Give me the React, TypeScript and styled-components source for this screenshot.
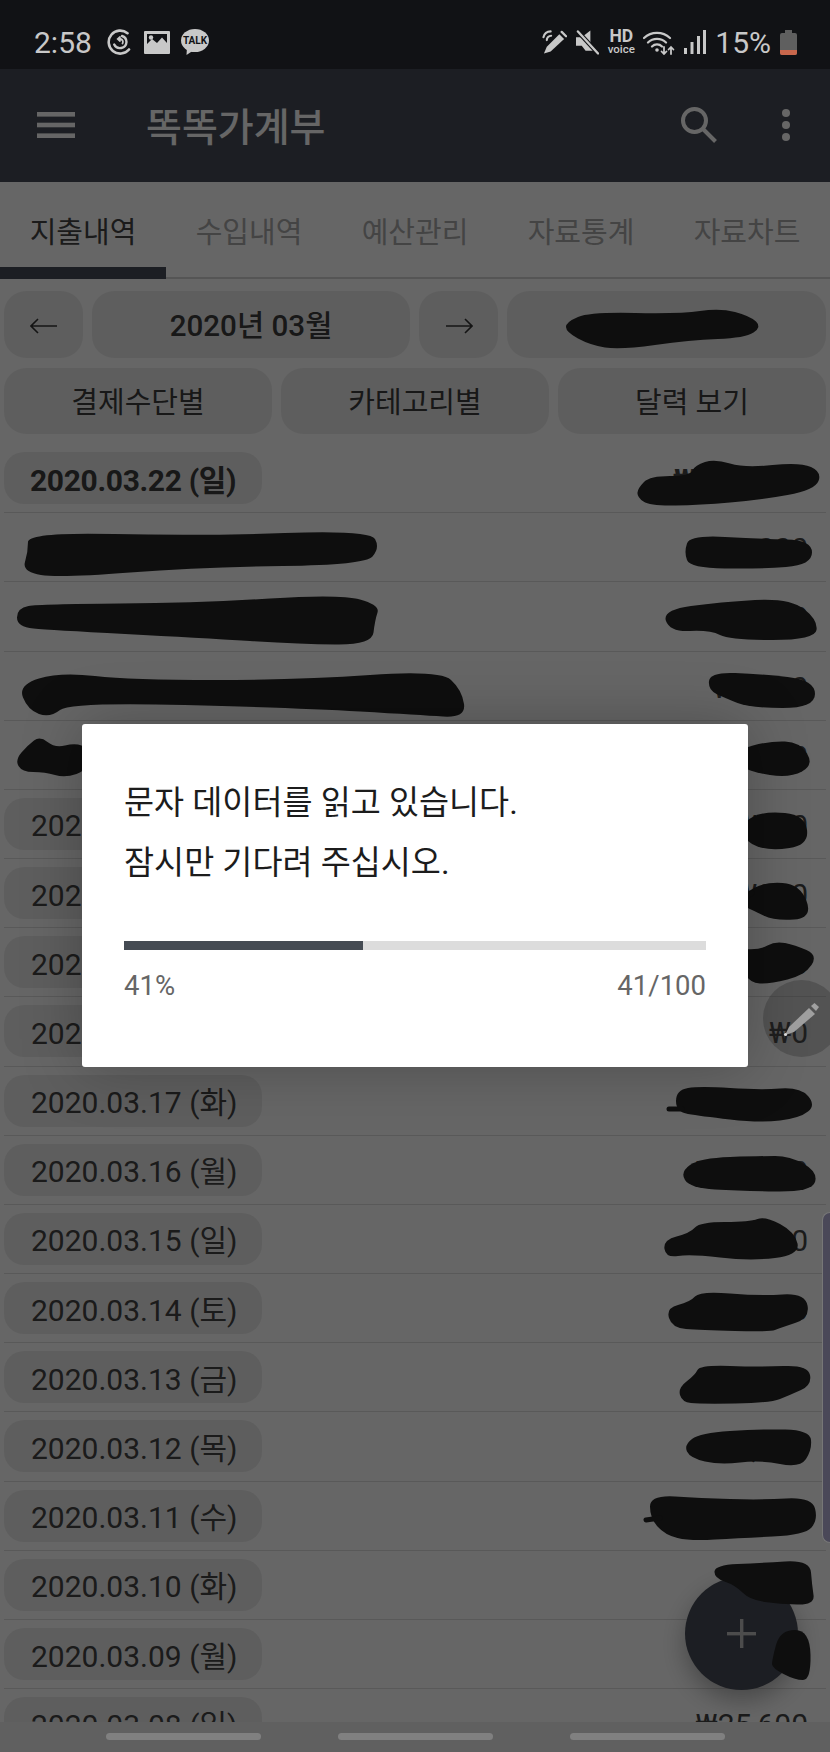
import React from "react"
import styled, { createGlobalStyle } from "styled-components"

const GlobalStyle = createGlobalStyle`
  html, body { margin: 0; padding: 0; background: #666; }
  body { font-family: Roboto, "Noto Sans CJK KR", sans-serif; }
  * { box-sizing: border-box; }
`

const TABS = ["지출내역", "수입내역", "예산관리", "자료통계", "자료차트"]
const FILTERS = ["결제수단별", "카테고리별", "달력 보기"]

interface RowData {
  date?: string
  amount: string
  bold?: boolean
}

// names and amounts are scribbled out in the reference, zeros only peek out at the edges
const ROWS: RowData[] = [
  { date: "2020.03.22 (일)", amount: "₩000,000", bold: true },
  { amount: "₩00,000" },
  { amount: "₩00,000" },
  { amount: "₩0,000" },
  { amount: "₩000" },
  { date: "2020.03.21 (토)", amount: "₩000" },
  { date: "2020.03.20 (금)", amount: "₩000" },
  { date: "2020.03.19 (목)", amount: "₩000" },
  { date: "2020.03.18 (수)", amount: "₩0" },
  { date: "2020.03.17 (화)", amount: "₩00,000" },
  { date: "2020.03.16 (월)", amount: "₩00,000" },
  { date: "2020.03.15 (일)", amount: "₩00,000" },
  { date: "2020.03.14 (토)", amount: "₩00,000" },
  { date: "2020.03.13 (금)", amount: "₩0,000" },
  { date: "2020.03.12 (목)", amount: "₩0,000" },
  { date: "2020.03.11 (수)", amount: "₩00,000" },
  { date: "2020.03.10 (화)", amount: "₩000" },
  { date: "2020.03.09 (월)", amount: "₩000" },
  { date: "2020.03.08 (일)", amount: "₩25,600" },
]

// outlines of the marker strokes, page coordinates, smoothed in blobPath
const SCRIBBLES: number[][] = [
  [566, 322, 590, 312, 680, 314, 720, 308, 750, 316, 762, 327, 745, 338, 690, 340, 620, 350, 590, 345, 566, 332],
  [638, 488, 650, 476, 690, 476, 695, 465, 715, 459, 745, 468, 800, 462, 822, 472, 815, 490, 760, 500, 700, 505, 650, 506, 637, 497],
  [28, 532, 200, 536, 370, 530, 380, 548, 365, 565, 200, 567, 60, 578, 22, 572, 28, 552],
  [690, 535, 760, 539, 812, 540, 812, 565, 760, 569, 690, 568, 684, 552],
  [17, 608, 40, 604, 200, 603, 340, 594, 380, 605, 375, 620, 372, 645, 300, 644, 200, 638, 50, 630, 17, 627],
  [662, 610, 720, 602, 790, 598, 818, 620, 815, 640, 730, 640, 710, 630, 670, 632],
  [18, 685, 60, 672, 130, 680, 300, 680, 440, 670, 462, 690, 466, 718, 420, 715, 300, 708, 70, 702, 50, 718, 28, 710],
  [710, 672, 760, 674, 815, 680, 815, 708, 750, 708, 725, 698, 708, 690],
  [15, 760, 28, 745, 40, 736, 55, 748, 75, 743, 88, 748, 88, 770, 65, 778, 45, 772, 22, 772],
  [736, 750, 770, 741, 800, 742, 814, 765, 790, 778, 750, 772, 736, 762],
  [742, 822, 765, 811, 805, 815, 809, 845, 770, 851, 745, 842],
  [738, 903, 745, 893, 765, 882, 800, 884, 813, 918, 775, 921, 752, 910],
  [732, 948, 760, 950, 775, 941, 795, 945, 818, 955, 805, 975, 770, 984, 750, 983, 740, 965],
  [676, 1090, 700, 1086, 760, 1090, 800, 1087, 816, 1105, 800, 1118, 760, 1123, 700, 1116, 676, 1112],
  [680, 1172, 700, 1158, 760, 1156, 790, 1156, 818, 1172, 812, 1192, 740, 1191, 690, 1188],
  [663, 1240, 690, 1233, 700, 1222, 750, 1222, 765, 1216, 795, 1232, 800, 1255, 750, 1261, 690, 1254, 666, 1258],
  [666, 1308, 690, 1302, 700, 1291, 760, 1296, 805, 1293, 810, 1318, 780, 1328, 770, 1332, 700, 1330, 672, 1328],
  [678, 1388, 695, 1375, 700, 1365, 760, 1367, 808, 1365, 812, 1385, 790, 1395, 770, 1403, 700, 1404, 682, 1402],
  [684, 1445, 700, 1433, 760, 1429, 810, 1430, 812, 1450, 800, 1468, 760, 1460, 720, 1465, 690, 1458],
  [650, 1495, 700, 1498, 760, 1500, 812, 1497, 818, 1520, 805, 1535, 740, 1538, 690, 1541, 665, 1535, 650, 1518],
  [715, 1565, 760, 1563, 810, 1560, 812, 1585, 815, 1605, 780, 1604, 750, 1600, 735, 1585, 714, 1578],
  [772, 1660, 780, 1630, 810, 1630, 811, 1680, 795, 1680, 772, 1668],
]
// the thin tails some strokes leave behind
const TAILS = ["M737 904 L752 893", "M669 1109 L682 1109", "M646 1520 L660 1518"]

const blobPath = (pts: number[]) => {
  const n = pts.length / 2
  const mid = (i: number) => {
    const a = i % n
    const b = (i + 1) % n
    return `${(pts[a * 2] + pts[b * 2]) / 2} ${(pts[a * 2 + 1] + pts[b * 2 + 1]) / 2}`
  }
  let d = `M${mid(0)}`
  for (let i = 1; i <= n; i++) {
    const p = i % n
    d += ` Q${pts[p * 2]} ${pts[p * 2 + 1]} ${mid(i)}`
  }
  return d + " Z"
}

const Page = styled.div`
  width: 830px;
  height: 1752px;
  display: flex;
  flex-direction: column;
  overflow: hidden;
`

const StatusBar = styled.header`
  height: 69px;
  flex: none;
  display: flex;
  align-items: center;
  justify-content: space-between;
  padding: 15px 33px 0 34px;
  background: #111215;
  color: #c8c8c8;
`
const StatusGroup = styled.div<{ $gap: number }>`
  display: flex;
  align-items: center;
  gap: ${(p) => p.$gap}px;
`
const Clock = styled.span`
  font-size: 30px;
  margin-right: 4px;
`
const Battery = styled.span`
  font-size: 30px;
`
const HdVoice = styled.span`
  display: flex;
  flex-direction: column;
  align-items: center;
  width: 26px;
  font-size: 17.5px;
  font-weight: 700;
  line-height: 15px;
  small {
    font-size: 11.5px;
    font-weight: 500;
    line-height: 11px;
  }
`

const Main = styled.main`
  position: relative;
  flex: 1;
  overflow: hidden;
  background: #fff;
`
const AppBar = styled.div`
  height: 113px;
  display: flex;
  align-items: center;
  background: #474c57;
  color: #fff;
  padding: 0 40px 1px 37px;
`
const Title = styled.h1`
  flex: 1;
  margin: 0 0 3px 71px;
  font-size: 39px;
  font-weight: 500;
`
const ActionGap = styled.span`
  width: 65px;
`
const TabBar = styled.nav`
  height: 97px;
  display: grid;
  grid-template-columns: repeat(5, 1fr);
  border-bottom: 2px solid #d4d4d4;
`
const Tab = styled.div<{ $active?: boolean }>`
  display: flex;
  align-items: center;
  justify-content: center;
  padding-top: 10px;
  margin-bottom: -2px;
  font-size: 29px;
  color: ${(p) => (p.$active ? "#444" : "#aaa")};
  border-bottom: 12px solid ${(p) => (p.$active ? "#474c57" : "transparent")};
`
const Toolbar = styled.div`
  padding: 12px 4px 0;
  display: flex;
  flex-direction: column;
  gap: 10px;
`
const MonthRow = styled.div`
  display: grid;
  grid-template-columns: 79px 318px 79px 1fr;
  gap: 9px;
  height: 67px;
`
const FilterRow = styled.div`
  display: grid;
  grid-template-columns: repeat(3, 1fr);
  gap: 9px;
  height: 66px;
`
const ToolButton = styled.div<{ $strong?: boolean }>`
  display: flex;
  align-items: center;
  justify-content: center;
  padding-bottom: 2px;
  border-radius: 22px;
  background: #ececec;
  color: #3c3c3c;
  font-size: ${(p) => (p.$strong ? 29.6 : 29)}px;
  font-weight: ${(p) => (p.$strong ? 500 : 400)};
`
const ArrowButton = styled(ToolButton)`
  padding: 2px 0 0;
`
const List = styled.div`
  margin-top: 10px;
  padding: 0 4px;
`
const Row = styled.div`
  height: 69.18px;
  display: flex;
  align-items: center;
  justify-content: space-between;
  padding: 0 18px 0 0;
  border-bottom: 1px solid #dedede;
`
const DatePill = styled.div<{ $bold?: boolean }>`
  width: 258px;
  height: 52px;
  display: flex;
  align-items: center;
  padding: 0 0 1px ${(p) => (p.$bold ? 26 : 27)}px;
  border-radius: 20px;
  background: #ececec;
  color: ${(p) => (p.$bold ? "#3c3c3c" : "#444")};
  font-size: 30px;
  font-weight: ${(p) => (p.$bold ? 700 : 400)};
  letter-spacing: ${(p) => (p.$bold ? "-0.35px" : "0")};
`
const Amount = styled.span<{ $bold?: boolean }>`
  margin-left: auto;
  padding-top: 3px;
  font-size: 30px;
  color: #444;
  font-weight: ${(p) => (p.$bold ? 700 : 400)};
`
const Fab = styled.div`
  position: absolute;
  left: 685px;
  top: 1508px;
  width: 113px;
  height: 113px;
  border-radius: 50%;
  display: flex;
  align-items: center;
  justify-content: center;
  background: #474c57;
  box-shadow: 0 10px 24px rgba(0, 0, 0, 0.3);
`
const Scrim = styled.div`
  position: absolute;
  inset: 0;
  display: flex;
  align-items: center;
  justify-content: center;
  background: rgba(0, 0, 0, 0.6);
`
const ScribbleLayer = styled.svg`
  position: absolute;
  inset: 0;
`
const MemoButton = styled.div`
  position: absolute;
  left: 763px;
  top: 911px;
  width: 77px;
  height: 77px;
  border-radius: 50%;
  background: rgba(40, 40, 40, 0.3);
  padding: 14px 0 0 16px;
`
const EdgeHandle = styled.div`
  position: absolute;
  right: 0;
  top: 1143px;
  width: 8px;
  height: 331px;
  background: #4a4858;
  border: 1px solid #777;
  border-right: 0;
  border-radius: 10px 0 0 10px;
`
const Dialog = styled.div`
  position: relative;
  width: 666px;
  height: 343px;
  padding: 49px 42px 0;
  background: #fff;
  border-radius: 3px;
  box-shadow: 0 0 60px rgba(0, 0, 0, 0.25);
`
const Message = styled.p`
  margin: 0;
  font-size: 32.7px;
  line-height: 60px;
  color: #1c1c1c;
`
const Progress = styled.div`
  margin-top: 48px;
  height: 9px;
  background: #dcdcdc;
`
const ProgressFill = styled.div`
  height: 100%;
  background: #454b53;
`
const ProgressLabels = styled.div`
  margin-top: 20px;
  display: flex;
  justify-content: space-between;
  font-size: 27.5px;
  line-height: 32px;
  color: #666;
`
const NavBar = styled.footer`
  height: 30px;
  flex: none;
  display: flex;
  justify-content: center;
  gap: 77px;
  padding-top: 11px;
  background: #606060;
`
const NavHandle = styled.span`
  width: 155px;
  height: 7px;
  border-radius: 4px;
  background: #808080;
`

const SyncIcon = () => (
  <svg width="26" height="26" viewBox="0 0 26 26" fill="none" stroke="#c8c8c8" strokeLinecap="round">
    <path d="M20.5 4.2 A11.5 11.5 0 1 0 22 20.5" strokeWidth="2.6" />
    <path d="M7.2 15.5 A6.5 6.5 0 0 0 19.5 13 A6.5 6.5 0 0 0 15 7" strokeWidth="2.4" />
    <path d="M15.5 14.5 A3 3 0 0 0 13.5 10 H11 M13 8 L10.8 10 L13 12" strokeWidth="1.8" />
  </svg>
)
const PictureIcon = () => (
  <svg width="26" height="23" viewBox="0 0 26 23">
    <rect width="26" height="23" rx="1" fill="#c8c8c8" />
    <path d="M3 3 H23 V12 L18 6.5 L13 12 L8 8 L3 13 Z" fill="#111215" />
    <circle cx="7" cy="6.5" r="2.2" fill="#c8c8c8" />
  </svg>
)
const TalkIcon = () => (
  <svg width="28" height="26" viewBox="0 0 28 26">
    <ellipse cx="14" cy="11.5" rx="14" ry="11.5" fill="#c8c8c8" />
    <path d="M6 18 L5.5 26 L13 21 Z" fill="#c8c8c8" />
    <text x="14" y="15" textAnchor="middle" fontSize="10" fontWeight="700" fontFamily="Roboto, sans-serif" fill="#111215">TALK</text>
  </svg>
)
const PenIcon = () => (
  <svg width="25" height="26" viewBox="0 0 26 26" fill="none" stroke="#c8c8c8" strokeLinecap="round">
    <path d="M2 25 L5 18 L18 5 L23 10 L9 23 Z" fill="#c8c8c8" stroke="none" />
    <path d="M20.5 2.5 L25 7" strokeWidth="2.4" />
    <path d="M1.5 8 A8 8 0 0 1 9 2 M5 11 A4.5 4.5 0 0 1 9.5 6.5" strokeWidth="2.2" />
  </svg>
)
const MuteIcon = () => (
  <svg width="23" height="26" viewBox="0 0 24 26">
    <path d="M0 8 H6 L15 1 V15 L21 22 H10 L6 17 H0 Z" fill="#c8c8c8" />
    <path d="M1 1 L23 25" stroke="#111215" strokeWidth="4.5" />
    <path d="M2 2 L23 25" stroke="#c8c8c8" strokeWidth="2.4" strokeLinecap="round" />
  </svg>
)
const WifiIcon = () => (
  <svg width="32" height="25" viewBox="0 0 32 25" fill="none" stroke="#c8c8c8" strokeLinecap="round">
    <path d="M1 8 A19 19 0 0 1 27 8 M5 12.5 A13 13 0 0 1 23 12.5 M9 16.5 A7 7 0 0 1 19 16.5" strokeWidth="2.2" />
    <circle cx="14" cy="20" r="1.8" fill="#c8c8c8" stroke="none" />
    <path d="M21 17 V24 M18.6 21.5 L21 24 L23.4 21.5 M28 24 V17 M25.6 19.5 L28 17 L30.4 19.5" strokeWidth="1.8" />
  </svg>
)
const SignalIcon = () => (
  <svg width="22" height="24" viewBox="0 0 22 24" fill="#c8c8c8">
    <rect x="0" y="18" width="3" height="6" />
    <rect x="6.5" y="12" width="3" height="12" />
    <rect x="13" y="6" width="3" height="18" />
    <rect x="19" y="0" width="3" height="24" />
  </svg>
)
const BatteryIcon = () => (
  <svg width="17" height="25" viewBox="0 0 17 25">
    <path d="M5 0 H12 V3 H15 A2 2 0 0 1 17 5 V23 A2 2 0 0 1 15 25 H2 A2 2 0 0 1 0 23 V5 A2 2 0 0 1 2 3 H5 Z" fill="#5f5f5f" />
    <path d="M0 20 H17 V23 A2 2 0 0 1 15 25 H2 A2 2 0 0 1 0 23 Z" fill="#c8674c" />
  </svg>
)
const MenuIcon = () => (
  <svg width="38" height="26" viewBox="0 0 38 26" fill="#fff">
    <rect y="0" width="38" height="4.6" />
    <rect y="10.7" width="38" height="4.6" />
    <rect y="21.4" width="38" height="4.6" />
  </svg>
)
const SearchIcon = () => (
  <svg width="36" height="36" viewBox="0 0 36 36" fill="none" stroke="#fff" strokeWidth="4">
    <circle cx="13.5" cy="13.5" r="11.5" />
    <path d="M22 22 L34.5 34.5" />
  </svg>
)
const MoreIcon = () => (
  <svg width="8" height="32" viewBox="0 0 8 32" fill="#fff">
    <circle cx="4" cy="4" r="4" />
    <circle cx="4" cy="16" r="4" />
    <circle cx="4" cy="28" r="4" />
  </svg>
)
const ArrowIcon = ({ flip }: { flip?: boolean }) => (
  <svg width="28" height="16" viewBox="0 0 28 16" fill="none" stroke="#333" strokeWidth="1.6" style={flip ? { transform: "scaleX(-1)" } : undefined}>
    <path d="M1 8 H27 M8 1 L1 8 L8 15" />
  </svg>
)
const PlusIcon = () => (
  <svg width="29" height="29" viewBox="0 0 29 29" fill="#bdbdbd">
    <rect x="13" width="3.4" height="29" />
    <rect y="13" width="29" height="3.4" />
  </svg>
)
const PencilIcon = () => (
  <svg width="46" height="50" viewBox="0 0 46 50">
    <path d="M6 41 L10 33 L30 14 L36 20 L15 38 Z" fill="#a0a0a0" />
    <path d="M32 12 L35.5 9 L40 13 L37 17 Z" fill="#a0a0a0" />
    <circle cx="6.5" cy="40.5" r="1.6" fill="#ddd" />
  </svg>
)

export default function App() {
  const percent = 41
  return (
    <Page>
      <GlobalStyle />
      <StatusBar>
        <StatusGroup $gap={11}>
          <Clock>2:58</Clock>
          <SyncIcon />
          <PictureIcon />
          <TalkIcon />
        </StatusGroup>
        <StatusGroup $gap={9}>
          <PenIcon />
          <MuteIcon />
          <HdVoice>
            HD
            <small>voice</small>
          </HdVoice>
          <WifiIcon />
          <SignalIcon />
          <Battery>15%</Battery>
          <BatteryIcon />
        </StatusGroup>
      </StatusBar>

      <Main>
        <AppBar>
          <MenuIcon />
          <Title>똑똑가계부</Title>
          <SearchIcon />
          <ActionGap />
          <MoreIcon />
        </AppBar>
        <TabBar>
          {TABS.map((tab, i) => (
            <Tab key={tab} $active={i === 0}>{tab}</Tab>
          ))}
        </TabBar>
        <Toolbar>
          <MonthRow>
            <ArrowButton><ArrowIcon /></ArrowButton>
            <ToolButton $strong>2020년 03월</ToolButton>
            <ArrowButton><ArrowIcon flip /></ArrowButton>
            <ToolButton />
          </MonthRow>
          <FilterRow>
            {FILTERS.map((f) => (
              <ToolButton key={f}>{f}</ToolButton>
            ))}
          </FilterRow>
        </Toolbar>
        <List>
          {ROWS.map((row, i) => (
            <Row key={i}>
              {row.date && <DatePill $bold={row.bold}>{row.date}</DatePill>}
              <Amount $bold={row.bold}>{row.amount}</Amount>
            </Row>
          ))}
        </List>
        <Fab><PlusIcon /></Fab>

        <Scrim>
          <ScribbleLayer width="830" height="1653" viewBox="0 69 830 1653">
            {SCRIBBLES.map((pts, i) => (
              <path key={i} d={blobPath(pts)} fill="#0e0e0e" />
            ))}
            {TAILS.map((d) => (
              <path key={d} d={d} fill="none" stroke="#0e0e0e" strokeWidth="5" strokeLinecap="round" />
            ))}
          </ScribbleLayer>
          <MemoButton><PencilIcon /></MemoButton>
          <Dialog>
            <Message>
              문자 데이터를 읽고 있습니다.
              <br />
              잠시만 기다려 주십시오.
            </Message>
            <Progress>
              <ProgressFill style={{ width: `${percent}%` }} />
            </Progress>
            <ProgressLabels>
              <span>{percent}%</span>
              <span>{percent}/100</span>
            </ProgressLabels>
          </Dialog>
        </Scrim>
        <EdgeHandle />
      </Main>

      <NavBar>
        <NavHandle />
        <NavHandle />
        <NavHandle />
      </NavBar>
    </Page>
  )
}
